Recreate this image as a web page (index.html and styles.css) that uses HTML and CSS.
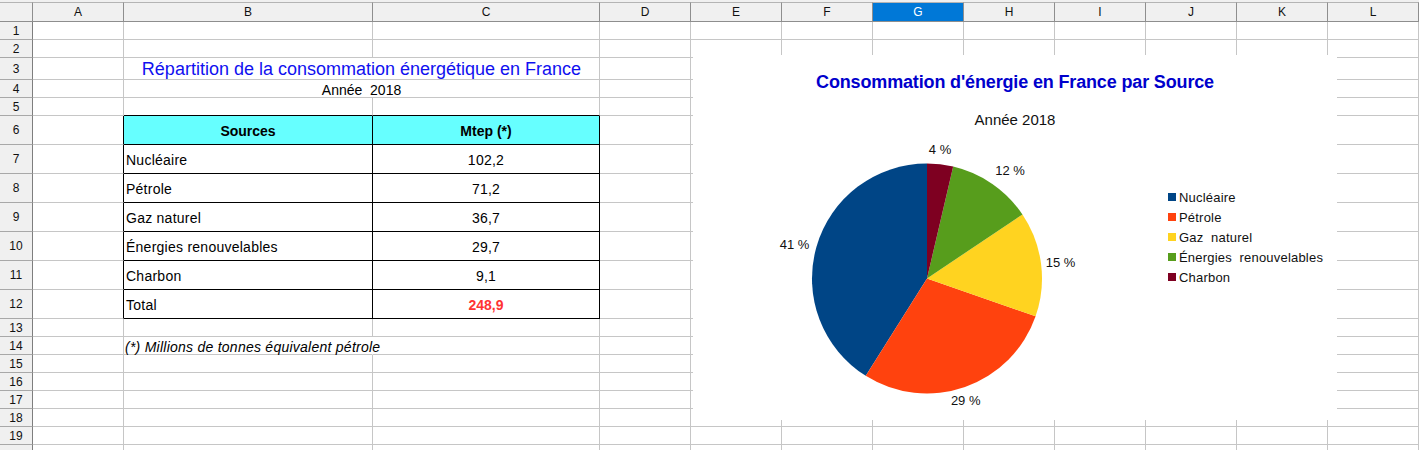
FILE: index.html
```
<!DOCTYPE html>
<html lang="fr">
<head>
<meta charset="utf-8">
<title>Consommation énergétique</title>
<link rel="stylesheet" href="styles.css">
</head>
<body>
<div class="sheet">
  <div class="ch corner"></div><div class="ch">A</div><div class="ch">B</div><div class="ch">C</div><div class="ch">D</div><div class="ch">E</div><div class="ch">F</div><div class="ch sel">G</div><div class="ch">H</div><div class="ch">I</div><div class="ch">J</div><div class="ch">K</div><div class="ch">L</div>

  <div class="rh">1</div><div class="c"></div><div class="c"></div><div class="c"></div><div class="c"></div><div class="c"></div><div class="c"></div><div class="c"></div><div class="c"></div><div class="c"></div><div class="c"></div><div class="c"></div><div class="c"></div>
  <div class="rh">2</div><div class="c"></div><div class="c"></div><div class="c"></div><div class="c"></div><div class="c"></div><div class="c"></div><div class="c"></div><div class="c"></div><div class="c"></div><div class="c"></div><div class="c"></div><div class="c"></div>
  <div class="rh">3</div><div class="c"></div><div class="c span2 title">Répartition de la consommation énergétique en France</div><div class="c"></div><div class="c"></div><div class="c"></div><div class="c"></div><div class="c"></div><div class="c"></div><div class="c"></div><div class="c"></div><div class="c"></div>
  <div class="rh">4</div><div class="c"></div><div class="c span2 subtitle">Année  2018</div><div class="c"></div><div class="c"></div><div class="c"></div><div class="c"></div><div class="c"></div><div class="c"></div><div class="c"></div><div class="c"></div><div class="c"></div>
  <div class="rh">5</div><div class="c"></div><div class="c bb"></div><div class="c bb"></div><div class="c"></div><div class="c"></div><div class="c"></div><div class="c"></div><div class="c"></div><div class="c"></div><div class="c"></div><div class="c"></div><div class="c"></div>
  <div class="rh">6</div><div class="c br"></div><div class="c t th">Sources</div><div class="c t th">Mtep (*)</div><div class="c"></div><div class="c"></div><div class="c"></div><div class="c"></div><div class="c"></div><div class="c"></div><div class="c"></div><div class="c"></div><div class="c"></div>
  <div class="rh">7</div><div class="c br"></div><div class="c t">Nucléaire</div><div class="c t v">102,2</div><div class="c"></div><div class="c"></div><div class="c"></div><div class="c"></div><div class="c"></div><div class="c"></div><div class="c"></div><div class="c"></div><div class="c"></div>
  <div class="rh">8</div><div class="c br"></div><div class="c t">Pétrole</div><div class="c t v">71,2</div><div class="c"></div><div class="c"></div><div class="c"></div><div class="c"></div><div class="c"></div><div class="c"></div><div class="c"></div><div class="c"></div><div class="c"></div>
  <div class="rh">9</div><div class="c br"></div><div class="c t">Gaz naturel</div><div class="c t v">36,7</div><div class="c"></div><div class="c"></div><div class="c"></div><div class="c"></div><div class="c"></div><div class="c"></div><div class="c"></div><div class="c"></div><div class="c"></div>
  <div class="rh">10</div><div class="c br"></div><div class="c t">Énergies renouvelables</div><div class="c t v">29,7</div><div class="c"></div><div class="c"></div><div class="c"></div><div class="c"></div><div class="c"></div><div class="c"></div><div class="c"></div><div class="c"></div><div class="c"></div>
  <div class="rh">11</div><div class="c br"></div><div class="c t">Charbon</div><div class="c t v">9,1</div><div class="c"></div><div class="c"></div><div class="c"></div><div class="c"></div><div class="c"></div><div class="c"></div><div class="c"></div><div class="c"></div><div class="c"></div>
  <div class="rh">12</div><div class="c br"></div><div class="c t">Total</div><div class="c t v tot">248,9</div><div class="c"></div><div class="c"></div><div class="c"></div><div class="c"></div><div class="c"></div><div class="c"></div><div class="c"></div><div class="c"></div><div class="c"></div>
  <div class="rh">13</div><div class="c"></div><div class="c"></div><div class="c"></div><div class="c"></div><div class="c"></div><div class="c"></div><div class="c"></div><div class="c"></div><div class="c"></div><div class="c"></div><div class="c"></div><div class="c"></div>
  <div class="rh">14</div><div class="c"></div><div class="c nobr note">(*) Millions de tonnes équivalent pétrole</div><div class="c"></div><div class="c"></div><div class="c"></div><div class="c"></div><div class="c"></div><div class="c"></div><div class="c"></div><div class="c"></div><div class="c"></div><div class="c"></div>
  <div class="rh">15</div><div class="c"></div><div class="c"></div><div class="c"></div><div class="c"></div><div class="c"></div><div class="c"></div><div class="c"></div><div class="c"></div><div class="c"></div><div class="c"></div><div class="c"></div><div class="c"></div>
  <div class="rh">16</div><div class="c"></div><div class="c"></div><div class="c"></div><div class="c"></div><div class="c"></div><div class="c"></div><div class="c"></div><div class="c"></div><div class="c"></div><div class="c"></div><div class="c"></div><div class="c"></div>
  <div class="rh">17</div><div class="c"></div><div class="c"></div><div class="c"></div><div class="c"></div><div class="c"></div><div class="c"></div><div class="c"></div><div class="c"></div><div class="c"></div><div class="c"></div><div class="c"></div><div class="c"></div>
  <div class="rh">18</div><div class="c"></div><div class="c"></div><div class="c"></div><div class="c"></div><div class="c"></div><div class="c"></div><div class="c"></div><div class="c"></div><div class="c"></div><div class="c"></div><div class="c"></div><div class="c"></div>
  <div class="rh">19</div><div class="c"></div><div class="c"></div><div class="c"></div><div class="c"></div><div class="c"></div><div class="c"></div><div class="c"></div><div class="c"></div><div class="c"></div><div class="c"></div><div class="c"></div><div class="c"></div>
  <div class="rh"></div><div class="c"></div><div class="c"></div><div class="c"></div><div class="c"></div><div class="c"></div><div class="c"></div><div class="c"></div><div class="c"></div><div class="c"></div><div class="c"></div><div class="c"></div><div class="c"></div>

  <div class="chart">
    <div class="ctitle">Consommation d'énergie en France par Source</div>
    <div class="csub">Année 2018</div>
    <div class="cbody">
      <svg class="pie" width="465" height="291" viewBox="0 0 465 291">
        <path class="s1" d="M234,149.5 L234,34.5 A115,115 0 0 0 172.75,246.84 Z"/>
        <path class="s2" d="M234,149.5 L172.75,246.84 A115,115 0 0 0 342.6,187.3 Z"/>
        <path class="s3" d="M234,149.5 L342.6,187.3 A115,115 0 0 0 329.46,85.39 Z"/>
        <path class="s4" d="M234,149.5 L329.46,85.39 A115,115 0 0 0 260.19,37.52 Z"/>
        <path class="s5" d="M234,149.5 L260.19,37.52 A115,115 0 0 0 234,34.5 Z"/>
        <text class="lbl" x="247" y="20.3">4 %</text>
        <text class="lbl" x="317" y="41.7">12 %</text>
        <text class="lbl" x="367.5" y="133.7">15 %</text>
        <text class="lbl" x="272.7" y="271.7">29 %</text>
        <text class="lbl" x="101.5" y="115.7">41 %</text>
      </svg>
      <div class="legend">
        <div class="li"><span class="sw s1"></span>Nucléaire</div>
        <div class="li"><span class="sw s2"></span>Pétrole</div>
        <div class="li"><span class="sw s3"></span>Gaz  naturel</div>
        <div class="li"><span class="sw s4"></span>Énergies  renouvelables</div>
        <div class="li"><span class="sw s5"></span>Charbon</div>
      </div>
    </div>
  </div>
</div>
</body>
</html>
```
FILE: styles.css
```
* { box-sizing: border-box; }

html, body {
  margin: 0;
  background: #ffffff;
  overflow: hidden;
}

body {
  font-family: "Liberation Sans", Arial, sans-serif;
  color: #000;
}

.sheet {
  position: relative;
  display: grid;
  grid-template-columns: 33px 91px 249px 227px repeat(9, 91px);
  grid-template-rows: 20px 18px 18px 22px 18px 18px repeat(7, 29px) repeat(8, 18px);
  padding-top: 2px;
  background: #f0f0f0;
  width: 1419px;
  height: 450px;
}

.c {
  background: #fff;
  border-right: 1px solid #c6c6c6;
  border-bottom: 1px solid #c6c6c6;
  display: flex;
  align-items: center;
  font-size: 14px;
  white-space: pre;
  min-width: 0;
  padding-left: 2px;
  padding-top: 2px;
}

.ch {
  background: #f0f0f0;
  border-top: 1px solid #b4b4b4;
  border-right: 1px solid #8e8e8e;
  border-bottom: 1px solid #8e8e8e;
  display: flex;
  align-items: center;
  justify-content: center;
  font-size: 12px;
  color: #111;
}

.ch.sel {
  background: #0078d7;
  color: #fff;
}

.rh {
  background: #f0f0f0;
  border-right: 1px solid #7e7e7e;
  border-bottom: 1px solid #a8a8a8;
  display: flex;
  align-items: center;
  justify-content: center;
  font-size: 12px;
  color: #111;
}

.span2 {
  grid-column: span 2;
  justify-content: center;
  padding-left: 0;
}

.title {
  font-size: 18px;
  color: #1010f0;
}

.subtitle {
  font-size: 14px;
}

.bb { border-bottom-color: #000; }
.br { border-right-color: #000; }

.t {
  border-right-color: #000;
  border-bottom-color: #000;
  letter-spacing: 0.25px;
}

.th {
  background: #66ffff;
  font-weight: bold;
  justify-content: center;
  letter-spacing: 0;
  padding-left: 0;
}

.v {
  justify-content: center;
  padding-left: 0;
}

.tot {
  color: #ff3333;
  font-weight: bold;
  letter-spacing: 0;
}

.nobr { border-right-color: transparent; }

.note {
  position: relative;
  z-index: 1;
  font-style: italic;
  padding-left: 1px;
  letter-spacing: 0.25px;
}

/* chart object floating over the grid */
.chart {
  position: absolute;
  z-index: 2;
  left: 693px;
  top: 55px;
  width: 644px;
  height: 365px;
  background: #fff;
  display: flex;
  flex-direction: column;
}

.ctitle {
  padding-top: 16px;
  font-size: 18px;
  line-height: 22px;
  font-weight: bold;
  color: #0000cc;
  text-align: center;
  letter-spacing: -0.15px;
}

.csub {
  margin-top: 18px;
  font-size: 15px;
  line-height: 18px;
  text-align: center;
  color: #111;
}

.cbody {
  display: flex;
  align-items: flex-start;
}

.pie { display: block; flex: none; }

.s1 { fill: #004586; background: #004586; }
.s2 { fill: #ff420e; background: #ff420e; }
.s3 { fill: #ffd320; background: #ffd320; }
.s4 { fill: #579d1c; background: #579d1c; }
.s5 { fill: #7e0021; background: #7e0021; }

.lbl {
  font-family: "Liberation Sans", Arial, sans-serif;
  font-size: 13px;
  fill: #111;
  text-anchor: middle;
  dominant-baseline: central;
}

.legend {
  margin-left: 10px;
  margin-top: 58px;
  display: flex;
  flex-direction: column;
}

.li {
  display: flex;
  align-items: center;
  height: 20px;
  font-size: 13px;
  letter-spacing: 0.2px;
  white-space: pre;
  color: #111;
}

.sw {
  width: 8px;
  height: 8px;
  margin-right: 3px;
  flex: none;
}
```
